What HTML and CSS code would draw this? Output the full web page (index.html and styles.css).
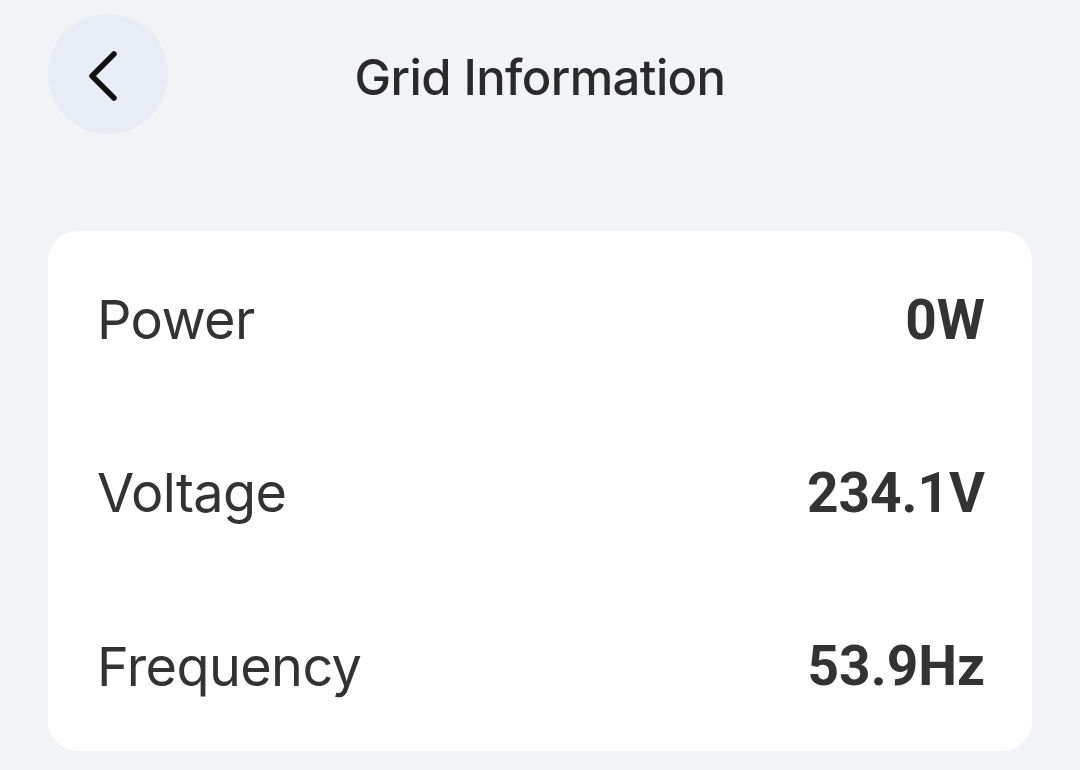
FILE: index.html
```html
<!DOCTYPE html>
<html>
<head>
<meta charset="utf-8">
<link rel="stylesheet" href="styles.css">
</head>
<body>
<div class="page">
  <header class="topbar">
    <button class="back" aria-label="Back">
      <svg width="40" height="52" viewBox="0 0 40 52"><path d="M30 4 L8 26 L30 48" fill="none" stroke="#111" stroke-width="5.5" stroke-linecap="round" stroke-linejoin="round"/></svg>
    </button>
    <h1 class="title">Grid Information</h1>
  </header>
  <section class="card">
    <div class="row"><span class="label">Power</span><span class="value">0W</span></div>
    <div class="row"><span class="label">Voltage</span><span class="value">234.1V</span></div>
    <div class="row"><span class="label">Frequency</span><span class="value">53.9Hz</span></div>
  </section>
</div>
</body>
</html>
```
FILE: styles.css
```css
html, body {
  margin: 0;
  padding: 0;
  background: #f2f3f7;
}
.page {
  width: 1080px;
  height: 770px;
  padding: 14px 48px 0 48px;
  box-sizing: border-box;
  font-family: Inter, "Open Sans", sans-serif;
  color: #2e2e2e;
}
.topbar {
  position: relative;
  height: 120px;
  display: flex;
  align-items: center;
  justify-content: center;
}
.back {
  position: absolute;
  left: 0;
  top: 0;
  width: 120px;
  height: 120px;
  border-radius: 50%;
  border: none;
  background: #e8ecf4;
  display: flex;
  align-items: center;
  justify-content: center;
  padding: 4px 8px 0 0;
}
.title {
  margin: 6px 0 0 0;
  font-size: 49px;
  font-weight: 500;
  letter-spacing: -0.6px;
  color: #2a2a2a;
}
.card {
  margin-top: 97px;
  height: 520px;
  background: #ffffff;
  border-radius: 30px;
  display: flex;
  flex-direction: column;
}
.row {
  flex: 1;
  box-sizing: border-box;
  display: flex;
  align-items: center;
  justify-content: space-between;
  padding: 4px 47px 0 49px;
}
.label {
  font-size: 54px;
  font-weight: 400;
  color: #333;
  letter-spacing: -0.6px;
}
.value {
  font-family: Roboto, "Liberation Sans", sans-serif;
  font-size: 55px;
  font-weight: 700;
  color: #333;
}
```
